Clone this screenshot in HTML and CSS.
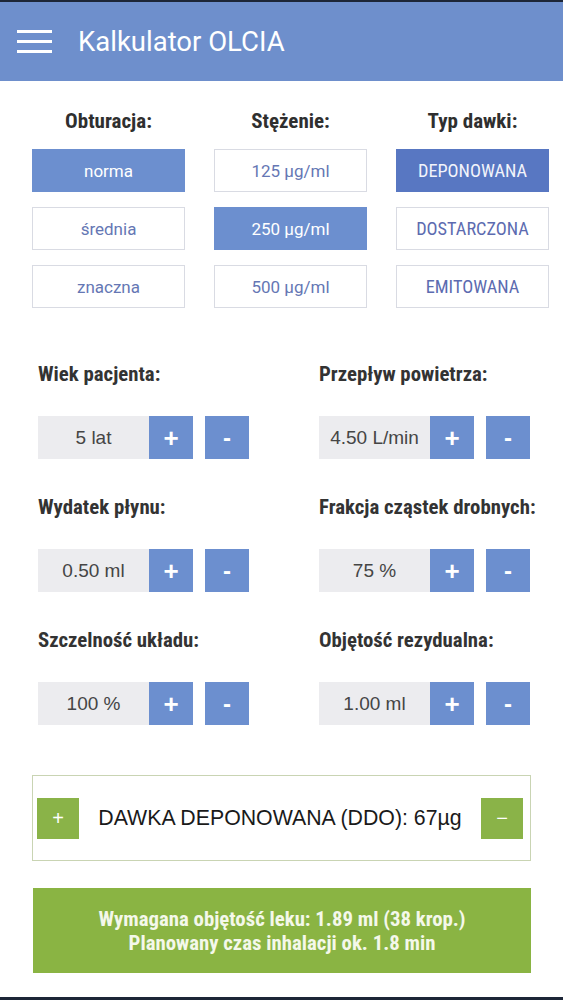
FILE: index.html
```html
<!DOCTYPE html>
<html lang="pl">
<head>
<meta charset="utf-8">
<title>Kalkulator OLCIA</title>
<link rel="stylesheet" href="styles.css">
</head>
<body>
<div class="edge"></div>
<header class="appbar">
  <svg class="menu" width="35" height="24" viewBox="0 0 35 24" aria-hidden="true">
    <rect x="0" y="0" width="35" height="3" fill="#fff"/>
    <rect x="0" y="10" width="35" height="3" fill="#fff"/>
    <rect x="0" y="20" width="35" height="3" fill="#fff"/>
  </svg>
  <h1 class="title">Kalkulator OLCIA</h1>
</header>

<section class="options">
  <div class="opt-col">
    <h2 class="opt-head">Obturacja:</h2>
    <div class="opt active">norma</div>
    <div class="opt">średnia</div>
    <div class="opt">znaczna</div>
  </div>
  <div class="opt-col">
    <h2 class="opt-head">Stężenie:</h2>
    <div class="opt">125 µg/ml</div>
    <div class="opt active">250 µg/ml</div>
    <div class="opt">500 µg/ml</div>
  </div>
  <div class="opt-col">
    <h2 class="opt-head">Typ dawki:</h2>
    <div class="opt caps active dark">DEPONOWANA</div>
    <div class="opt caps">DOSTARCZONA</div>
    <div class="opt caps">EMITOWANA</div>
  </div>
</section>

<section class="params">
  <div class="param">
    <h3 class="param-label">Wiek pacjenta:</h3>
    <div class="stepper"><span class="val">5 lat</span><span class="btn">+</span><span class="btn minus">-</span></div>
  </div>
  <div class="param">
    <h3 class="param-label">Przepływ powietrza:</h3>
    <div class="stepper"><span class="val">4.50 L/min</span><span class="btn">+</span><span class="btn minus">-</span></div>
  </div>
  <div class="param">
    <h3 class="param-label">Wydatek płynu:</h3>
    <div class="stepper"><span class="val">0.50 ml</span><span class="btn">+</span><span class="btn minus">-</span></div>
  </div>
  <div class="param">
    <h3 class="param-label">Frakcja cząstek drobnych:</h3>
    <div class="stepper"><span class="val">75 %</span><span class="btn">+</span><span class="btn minus">-</span></div>
  </div>
  <div class="param">
    <h3 class="param-label">Szczelność układu:</h3>
    <div class="stepper"><span class="val">100 %</span><span class="btn">+</span><span class="btn minus">-</span></div>
  </div>
  <div class="param">
    <h3 class="param-label">Objętość rezydualna:</h3>
    <div class="stepper"><span class="val">1.00 ml</span><span class="btn">+</span><span class="btn minus">-</span></div>
  </div>
</section>

<section class="dose">
  <span class="gbtn">+</span>
  <span class="dose-text">DAWKA DEPONOWANA (DDO): 67µg</span>
  <span class="gbtn">−</span>
</section>

<section class="result">
  <p>Wymagana objętość leku: 1.89 ml (38 krop.)</p>
  <p>Planowany czas inhalacji ok. 1.8 min</p>
</section>
<div class="edge bottom"></div>
</body>
</html>
```

FILE: styles.css
```css
* { box-sizing: border-box; }
html, body {
  margin: 0;
  padding: 0;
  background: #ffffff;
  font-family: "Roboto", "Liberation Sans", sans-serif;
}
body {
  width: 563px;
  height: 1000px;
  overflow: hidden;
  position: relative;
}
.edge {
  height: 2px;
  background: #1d2637;
}
.edge.bottom {
  position: absolute;
  left: 0;
  right: 0;
  bottom: 0;
  height: 3px;
}
.appbar {
  height: 79px;
  background: #6e8fcc;
  display: flex;
  align-items: center;
  padding-left: 17px;
}
.menu { display: block; }
.title {
  margin: 0 0 0 26px;
  color: #fff;
  font-family: "Roboto", sans-serif;
  font-weight: 400;
  font-size: 27.5px;
}

/* option columns */
.options {
  display: grid;
  grid-template-columns: 153px 153px 153px;
  column-gap: 29px;
  padding-left: 32px;
  margin-top: 28px;
}
.opt-col {
  display: flex;
  flex-direction: column;
  gap: 15px;
}
.opt-head {
  margin: 0 0 1px;
  height: 24px;
  line-height: 24px;
  text-align: center;
  font-family: "Roboto Condensed", "Liberation Sans Narrow", "DejaVu Sans Condensed", sans-serif;
  font-weight: 700;
  font-size: 21px;
  color: #2f2f2f;
}
.opt {
  height: 43px;
  display: flex;
  align-items: center;
  justify-content: center;
  border: 1px solid #d9dbe3;
  color: #6577b4;
  font-family: "Roboto", sans-serif;
  font-size: 17px;
}
.opt.active {
  background: #6c8fcf;
  border-color: #6c8fcf;
  color: #fff;
}
.opt.active.dark {
  background: #5877c2;
  border-color: #5877c2;
}
.opt.caps {
  font-family: "Roboto Condensed", "Liberation Sans Narrow", "Roboto", sans-serif;
  font-size: 18.3px;
  color: #5c6bb0;
}
.opt.caps.active { color: #f2f4fb; }

/* parameter steppers */
.params {
  display: grid;
  grid-template-columns: 281px 244px;
  padding-left: 38px;
  margin-top: 54px;
  row-gap: 36px;
}
.param-label {
  margin: 0;
  height: 24px;
  line-height: 24px;
  font-family: "Roboto Condensed", "Liberation Sans Narrow", "DejaVu Sans Condensed", sans-serif;
  font-weight: 700;
  font-size: 20.8px;
  color: #333;
}
.stepper {
  display: flex;
  margin-top: 30px;
  height: 43px;
}
.val {
  width: 111px;
  background: #ececef;
  display: flex;
  align-items: center;
  justify-content: center;
  font-family: "Liberation Sans", sans-serif;
  font-size: 19px;
  color: #454545;
}
.btn {
  width: 44px;
  background: #6c8fcf;
  color: #fff;
  display: flex;
  align-items: center;
  justify-content: center;
  font-family: "Liberation Sans", sans-serif;
  font-weight: 700;
  font-size: 26px;
  line-height: 1;
}
.btn.minus {
  margin-left: 12px;
  font-size: 24px;
}

/* dose box */
.dose {
  margin: 50px 0 0 32px;
  width: 499px;
  height: 86px;
  border: 1px solid #c9d4b3;
  display: flex;
  align-items: center;
  justify-content: space-between;
  padding: 0 7px 0 4px;
}
.gbtn {
  width: 42px;
  height: 41px;
  background: #8ab348;
  color: #fff;
  display: flex;
  align-items: center;
  justify-content: center;
  font-family: "Liberation Sans", sans-serif;
  font-size: 20px;
}
.dose-text {
  font-family: "Liberation Sans", sans-serif;
  font-size: 21.3px;
  color: #1a1a1a;
}

/* result */
.result {
  margin: 27px 0 0 33px;
  width: 498px;
  height: 85px;
  background: #8ab443;
  display: flex;
  flex-direction: column;
  justify-content: center;
  align-items: center;
}
.result p {
  margin: 0;
  line-height: 24px;
  color: #f4f8ea;
  font-family: "Roboto Condensed", "Liberation Sans Narrow", "DejaVu Sans Condensed", sans-serif;
  font-weight: 700;
  font-size: 20.8px;
}
```
